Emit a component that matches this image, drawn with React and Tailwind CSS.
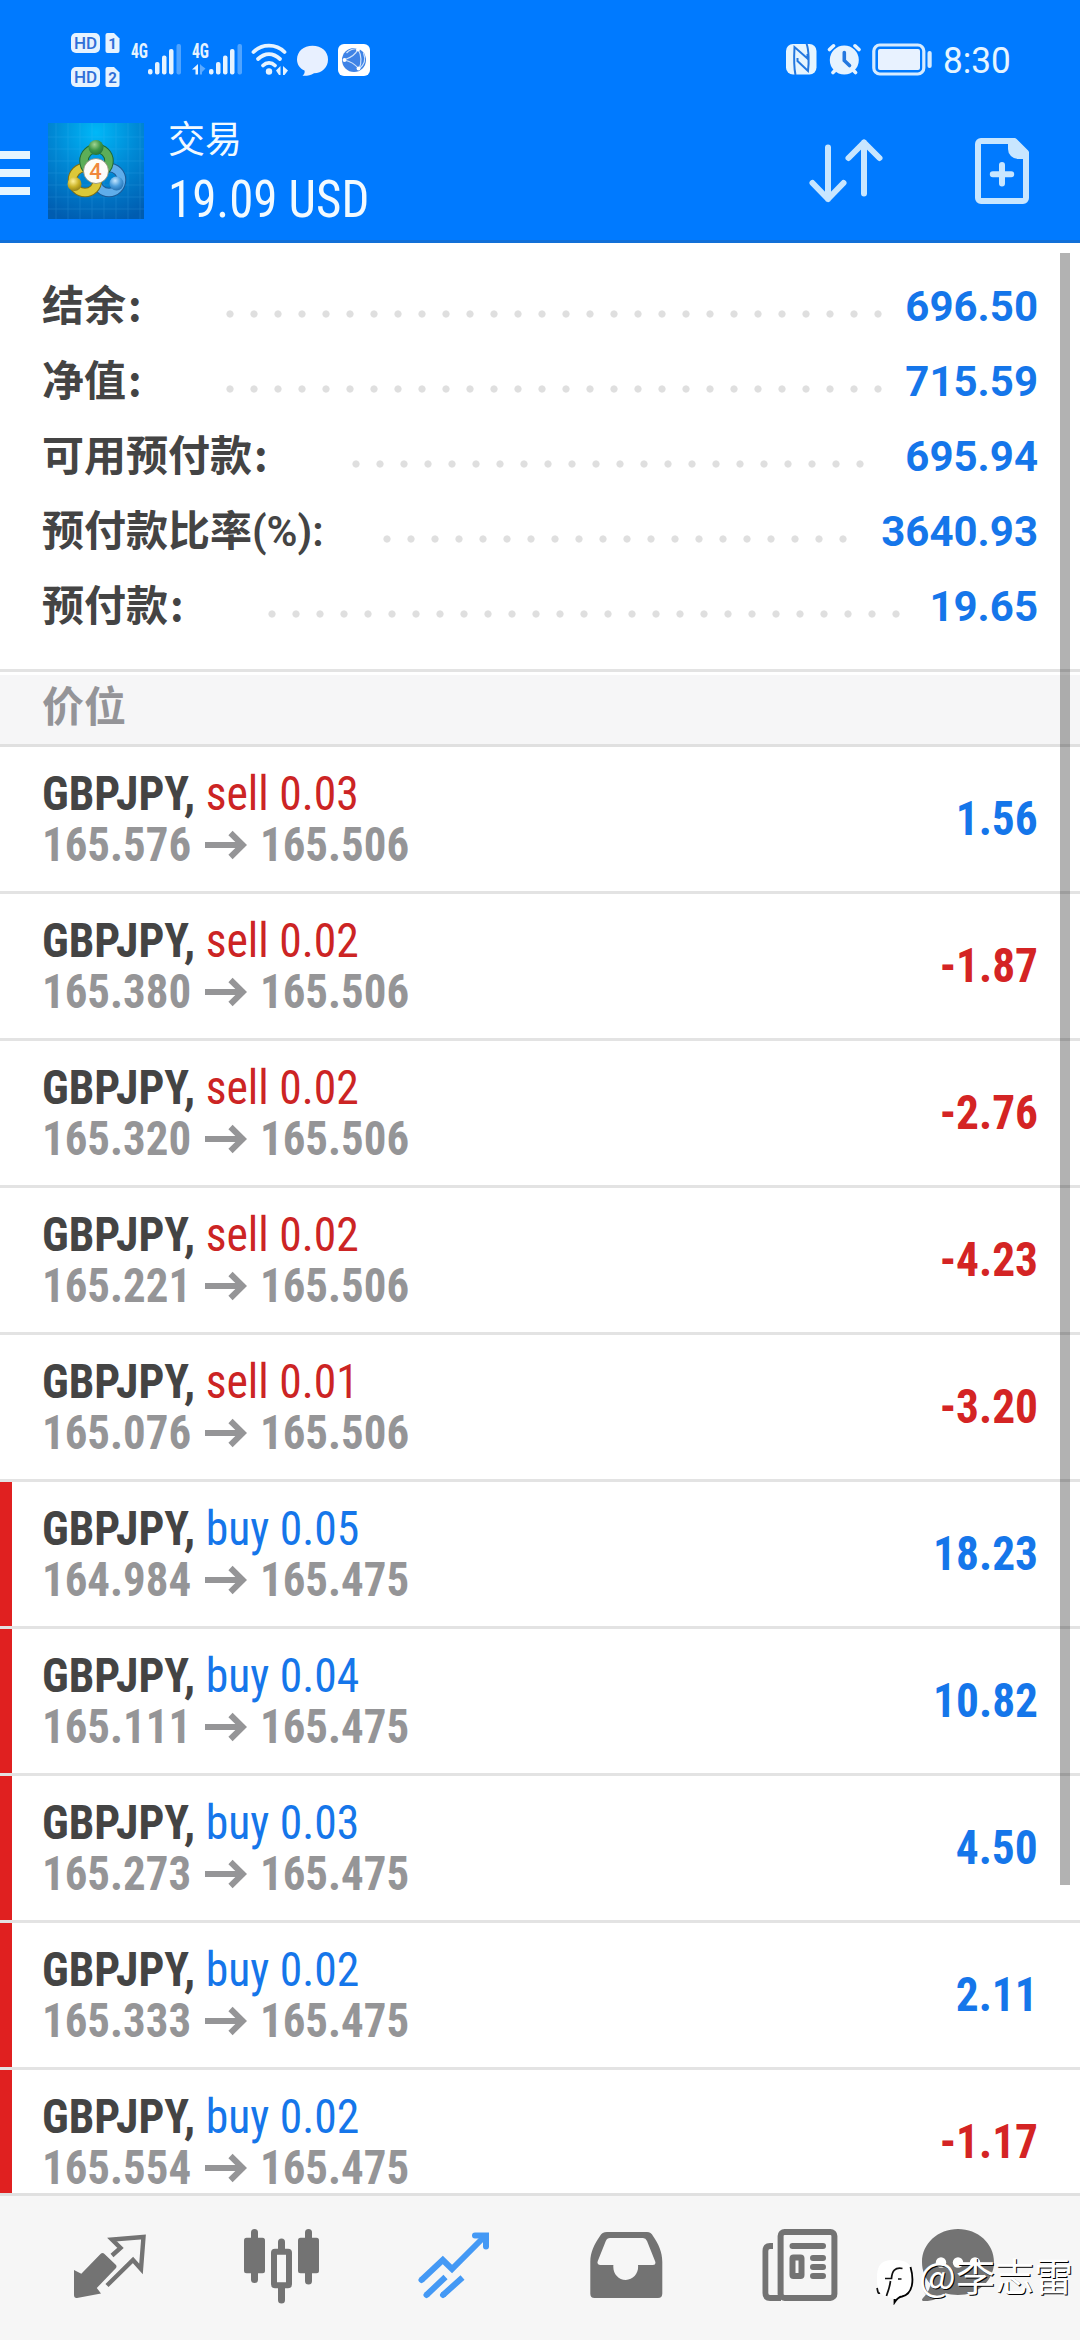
import React from 'react';

const summary = [
  { label: '结余', suffix: ':', value: '696.50', labelWidth: 'w-[176px]', leader: 'w-[672px]' },
  { label: '净值', suffix: ':', value: '715.59', labelWidth: 'w-[176px]', leader: 'w-[672px]' },
  { label: '可用预付款', suffix: ':', value: '695.94', labelWidth: 'w-[302px]', leader: 'w-[528px]' },
  { label: '预付款比率', suffix: '(%):', latin: true, value: '3640.93', labelWidth: 'w-[333px]', leader: 'w-[480px]' },
  { label: '预付款', suffix: ':', value: '19.65', labelWidth: 'w-[218px]', leader: 'w-[648px]' },
];

const positions = [
  { side: 'sell', volume: '0.03', open: '165.576', current: '165.506', profit: '1.56' },
  { side: 'sell', volume: '0.02', open: '165.380', current: '165.506', profit: '-1.87' },
  { side: 'sell', volume: '0.02', open: '165.320', current: '165.506', profit: '-2.76' },
  { side: 'sell', volume: '0.02', open: '165.221', current: '165.506', profit: '-4.23' },
  { side: 'sell', volume: '0.01', open: '165.076', current: '165.506', profit: '-3.20' },
  { side: 'buy', volume: '0.05', open: '164.984', current: '165.475', profit: '18.23', marked: true },
  { side: 'buy', volume: '0.04', open: '165.111', current: '165.475', profit: '10.82', marked: true },
  { side: 'buy', volume: '0.03', open: '165.273', current: '165.475', profit: '4.50', marked: true },
  { side: 'buy', volume: '0.02', open: '165.333', current: '165.475', profit: '2.11', marked: true },
  { side: 'buy', volume: '0.02', open: '165.554', current: '165.475', profit: '-1.17', marked: true },
];

function HdBadges() {
  return (
    <svg width="50" height="56" viewBox="0 0 50 56" className="font-['Roboto'] font-bold" fill="#e6f3ff">
      {[1, 2].map((n) => (
        <g key={n} transform={n === 1 ? 'translate(0 1)' : 'translate(0 35)'}>
          <rect width="29" height="20" rx="5" />
          <path d="M36.500 0 H43 L48.500 5.500 V18 a2 2 0 0 1 -2 2 H36.500 a2 2 0 0 1 -2 -2 V2 a2 2 0 0 1 2 -2z" />
          <text x="14.500" y="16" fontSize="17" fontWeight="500" textAnchor="middle" fill="#2f6fd8">HD</text>
          <text x="41.500" y="16" fontSize="15" textAnchor="middle" fill="#2f6fd8">{n}</text>
        </g>
      ))}
    </svg>
  );
}

function Signal({ data }) {
  return (
    <svg width="50" height="56" viewBox="0 0 50 56" fill="#e6f3ff">
      <text x="0" y="26" fontSize="20" textLength="17" lengthAdjust="spacingAndGlyphs" className="font-['Roboto_Condensed'] font-bold">4G</text>
      <rect x="17" y="37" width="4.500" height="5.500" rx="2" />
      <rect x="24" y="30" width="4.500" height="12.500" rx="2" />
      <rect x="31" y="23.500" width="4.500" height="19" rx="2" />
      <rect x="38" y="17" width="4.500" height="25.500" rx="2" />
      <rect x="45.500" y="12" width="4.500" height="30.500" rx="2" opacity="0.35" />
      {data && (
        <>
          <path d="M6 32 V42.500 H3.500 V37.500 H0z" />
          <path d="M8 32 V42.500 H10 V40 L13.500 36.500 L10 34z" opacity="0.4" />
        </>
      )}
    </svg>
  );
}

function WifiIcon() {
  return (
    <svg width="38" height="56" viewBox="0 0 38 56" fill="none" stroke="#e6f3ff" strokeWidth="3.800" strokeLinecap="round">
      <path d="M2.500 20 C11 11.500 25 11.500 33.500 20" />
      <path d="M7 27 C14 20.500 22 20.500 29 27" />
      <path d="M12 33.500 C15.500 30 20.500 30 24 33.500" />
      <circle cx="18" cy="39.500" r="3.200" fill="#e6f3ff" stroke="none" />
      <path d="M29.500 34 V43 H28 L25 38.500z M32 34 V43 H33.500 L37 38.500z" fill="#e6f3ff" stroke="none" />
    </svg>
  );
}

function BubbleIcon() {
  return (
    <svg width="32" height="56" viewBox="0 0 32 56" fill="#e8f0ff">
      <path d="M15.500 13.800 C24.500 13.800 31 19.500 31 27.500 C31 35.500 25 41 17 41.300 C13.500 43.500 10 44 5.500 43.800 C7.500 42 8 40.500 7.500 38.600 C3 36.500 0 32.500 0 27.500 C0 19.500 6.500 13.800 15.500 13.800z" />
    </svg>
  );
}

function BrowserIcon() {
  return (
    <svg width="32" height="56" viewBox="0 0 32 56">
      <rect y="12" width="32" height="32" rx="6" fill="#ffffff" />
      <circle cx="16" cy="28" r="12" fill="#3f83e6" />
      <g fill="none" stroke="#cfe2fb" strokeWidth="1.200">
        <path d="M6 28 C12 26 18 22 20 17" />
        <path d="M6 28 C11 29 17 32 21 37" />
        <path d="M20 17 C23.500 23 24 31 21 37" />
        <path d="M20 17 C16 16 11 18 8.500 21" />
        <path d="M21 37 C26 33 28 27 25.500 21" />
      </g>
      <g fill="#fff">
        <circle cx="6.500" cy="28" r="1.900" />
        <circle cx="20" cy="17.500" r="1.900" />
        <circle cx="20.500" cy="36.500" r="1.900" />
      </g>
    </svg>
  );
}

function NfcIcon() {
  return (
    <svg width="31" height="56" viewBox="0 0 31 56">
      <rect y="12" width="30.500" height="30.500" rx="7" fill="#e6f5ff" />
      <path d="M9.500 43 C8 36 8 24 8.500 15 L21.500 26.500 V22" fill="none" stroke="#2478e0" strokeWidth="2" />
      <path d="M20.500 11.500 C23 18 23 31 22 39 L11.500 29 V26" fill="none" stroke="#2478e0" strokeWidth="2" />
    </svg>
  );
}

function AlarmIcon() {
  return (
    <svg width="35" height="56" viewBox="0 0 35 56" fill="none" stroke="#e6f3ff" strokeWidth="3.600" strokeLinecap="round">
      <circle cx="17.300" cy="28" r="14.500" fill="#e6f3ff" stroke="none" />
      <path d="M2.500 17.500 L6.500 13.800 M32 17.500 L28 13.800 M6 40.500 L9 37.500 M28.500 40.500 L25.500 37.500" />
      <path d="M17.300 20.500 V28.500 L22.500 33.500" stroke="#2478e0" />
    </svg>
  );
}

function BatteryIcon() {
  return (
    <svg width="60" height="56" viewBox="0 0 60 56" fill="none">
      <rect x="1.800" y="13" width="50" height="29" rx="6" stroke="#d6ebff" strokeWidth="3.200" />
      <rect x="6" y="17" width="42" height="21" rx="2" fill="#e8f2ff" />
      <rect x="55.500" y="19" width="4.200" height="17" rx="2" fill="#d6ebff" />
    </svg>
  );
}

function AppLogo() {
  return (
    <svg width="96" height="96" viewBox="0 0 96 96">
      <defs>
        <radialGradient id="tile" cx="0.5" cy="0.1" r="0.95">
          <stop offset="0" stopColor="#00b8f8" />
          <stop offset="0.45" stopColor="#008ad6" />
          <stop offset="1" stopColor="#005cb0" />
        </radialGradient>
        <radialGradient id="green" cx="0.4" cy="0.3" r="0.8">
          <stop offset="0" stopColor="#9fd492" />
          <stop offset="0.5" stopColor="#3c9647" />
          <stop offset="1" stopColor="#1f6a34" />
        </radialGradient>
        <radialGradient id="yellow" cx="0.4" cy="0.3" r="0.8">
          <stop offset="0" stopColor="#fff29a" />
          <stop offset="0.5" stopColor="#ccb428" />
          <stop offset="1" stopColor="#857414" />
        </radialGradient>
        <radialGradient id="blue" cx="0.4" cy="0.3" r="0.8">
          <stop offset="0" stopColor="#c4e6ff" />
          <stop offset="0.5" stopColor="#4a9ddc" />
          <stop offset="1" stopColor="#1c66a8" />
        </radialGradient>
      </defs>
      <rect width="96" height="96" fill="url(#tile)" />
      <path d="M8 0V96M20 0V96M32 0V96M44 0V96M56 0V96M68 0V96M80 0V96M92 0V96M0 14H96M0 26H96M0 38H96M0 50H96M0 62H96M0 74H96M0 86H96" stroke="#5cc4ff" strokeWidth="0.800" opacity="0.2" />
      <g fill="none">
        <circle cx="61" cy="57" r="12.500" stroke="#1c5a96" strokeWidth="9.500" />
        <circle cx="61" cy="57" r="12.500" stroke="#5fadea" strokeWidth="7.500" />
        <circle cx="37" cy="57" r="12.500" stroke="#7f6f14" strokeWidth="9.500" />
        <circle cx="37" cy="57" r="12.500" stroke="#dcc838" strokeWidth="7.500" />
        <circle cx="48.500" cy="38" r="12.500" stroke="#1f6a34" strokeWidth="9.500" />
        <circle cx="48.500" cy="38" r="12.500" stroke="#5cae58" strokeWidth="7.500" />
      </g>
      <circle cx="48" cy="24.500" r="7.500" fill="url(#green)" />
      <circle cx="26.500" cy="61" r="7" fill="url(#yellow)" />
      <circle cx="68.500" cy="60.500" r="7" fill="url(#blue)" />
      <circle cx="48" cy="48" r="12.500" fill="#fdfcf8" stroke="#8a8a70" strokeWidth="0.800" />
      <text x="47.500" y="56" fontSize="22" textAnchor="middle" fill="#f0883c" className="font-['Roboto'] font-medium">4</text>
    </svg>
  );
}

function SortIcon() {
  return (
    <svg width="76" height="66" viewBox="0 0 76 66" fill="none" stroke="#c8e6ff" strokeWidth="6" strokeLinecap="round" strokeLinejoin="round">
      <path d="M20 9.500 V61 M4.500 45 L20 61 L35.500 45" />
      <path d="M56 55.500 V4.500 M40.500 20 L56 4.500 L71.500 20" />
    </svg>
  );
}

function NewOrderIcon() {
  return (
    <svg width="54" height="66" viewBox="0 0 54 66" fill="none" stroke="#c8e6ff" strokeWidth="6" strokeLinejoin="round">
      <path d="M6 3 H39.500 L51 14.500 V60 a3 3 0 0 1 -3 3 H6 a3 3 0 0 1 -3 -3 V6 a3 3 0 0 1 3 -3z" />
      <path d="M33 3 H40 L51 14 V21 H43 a10 10 0 0 1 -10 -10z" fill="#c8e6ff" stroke="none" />
      <path d="M27 27 V45.500 M17.800 36.300 H36.200" strokeLinecap="round" />
    </svg>
  );
}

function QuotesIcon() {
  return (
    <svg width="100" height="100" viewBox="0 0 100 100" fill="none">
      <path d="M16 52 L23.300 55.700 L42.500 36 Q44.500 34.200 46.500 36 L58 47 Q59 48.500 58 50 L38.800 70 L43 75.500 L19 80 Q16 80.300 16 77z" fill="#737373" />
      <path d="M54 37.500 L62.500 30 L54 21.500 L85.500 19 L83 51 L75 42 L49 67.500" stroke="#737373" strokeWidth="4.400" />
    </svg>
  );
}

function ChartIcon() {
  return (
    <svg width="100" height="100" viewBox="0 0 100 100" fill="#737373">
      <rect x="13" y="19.700" width="21" height="35.500" rx="2.500" />
      <rect x="20" y="11" width="7" height="54" rx="3.500" />
      <rect x="67" y="19.700" width="21" height="35.500" rx="2.500" />
      <rect x="74" y="11" width="7" height="55.500" rx="3.500" />
      <rect x="47" y="20.500" width="7" height="15" rx="3.500" />
      <rect x="47" y="66" width="7" height="19.500" rx="3.500" />
      <rect x="43" y="33.700" width="15" height="33.500" rx="1" fill="none" stroke="#737373" strokeWidth="6" />
    </svg>
  );
}

function TradeIcon() {
  return (
    <svg width="100" height="100" viewBox="0 0 100 100" fill="none" stroke="#4499f5" strokeWidth="6" strokeLinejoin="miter">
      <path d="M17.500 62 L38.800 42 L48 51 L80 19" />
      <path d="M17.500 62 L17.600 61.900 M71 17.500 H82 V28.500 M22.500 77 L22.600 76.900 M39 77 L39.100 76.900" strokeLinecap="round" />
      <path d="M22.500 77 L41.500 59 M39 77 L58.500 59.500" />
    </svg>
  );
}

function HistoryIcon() {
  return (
    <svg width="100" height="100" viewBox="0 0 100 100">
      <path
        d="M31 14 H71 Q75 14 77 18 C82.500 26 86.300 34 86.300 44 V75.500 Q86.300 80 82 80 H18.500 Q14.300 80 14.300 75.500 V44 C14.300 34 18.500 26 24 18 Q26 14 31 14z M34 20 Q31 20 29.800 23 L21.800 43 Q20.500 47 24 47 H37.400 C36.500 55 42 62 49.800 62 C57.500 62 63 55 62 47 H77 Q80.500 47 79 43 L71 23 Q69.700 20 67 20z"
        fill="#737373"
        fillRule="evenodd"
      />
    </svg>
  );
}

function NewsIcon() {
  return (
    <svg width="100" height="100" viewBox="0 0 100 100" fill="none" stroke="#737373">
      <path d="M24 28 H21 Q16.400 28 16.400 33 V75 Q16.400 80 21 80 H32" strokeWidth="5.800" />
      <rect x="31.600" y="13.900" width="53.800" height="66" rx="4" strokeWidth="6" />
      <path d="M43.500 28 H74" strokeWidth="6" strokeLinecap="round" />
      <path d="M64 40 H74 M64 49 H74 M64 58 H74" strokeWidth="6" strokeLinecap="round" />
      <rect x="43.500" y="39.500" width="9" height="18.500" rx="1" strokeWidth="6" />
    </svg>
  );
}

function ChatIcon() {
  return (
    <svg width="100" height="100" viewBox="0 0 100 100">
      <path d="M36 11 C56 11 72 25.500 72 44 C72 62.500 56 77 36 77 C31 77 27 76.500 23.500 75.300 C17 81 9 83.500 1 83 Q-1 82 1 80 C5 76 7.500 72 8.500 66 C3 60 0 52.500 0 44 C0 25.500 16 11 36 11z" fill="#737373" />
      <g fill="#fff">
        <circle cx="19" cy="44.500" r="5.200" />
        <circle cx="36" cy="44.500" r="5.200" />
        <circle cx="53" cy="44.500" r="5.200" />
      </g>
    </svg>
  );
}

function ArrowRight() {
  return (
    <svg width="42" height="30" viewBox="0 0 42 30" fill="none" stroke="#959597" strokeWidth="6">
      <path d="M0 15 H37 M25.500 3 L37.800 15 L25.500 27" />
    </svg>
  );
}

function StatusBar() {
  return (
    <div className="flex h-[102px] items-start justify-between pt-8 pl-[71px] pr-[67px]">
      <div className="flex">
        <HdBadges />
        <div className="ml-2.5"><Signal /></div>
        <div className="ml-[11px]"><Signal data /></div>
        <div className="ml-[9px]"><WifiIcon /></div>
        <div className="ml-2"><BubbleIcon /></div>
        <div className="ml-[9px]"><BrowserIcon /></div>
      </div>
      <div className="flex">
        <NfcIcon />
        <div className="ml-2.5"><AlarmIcon /></div>
        <div className="ml-2.5"><BatteryIcon /></div>
        <div className="ml-[11px] w-[70px]">
          <span className="inline-block origin-left scale-x-[0.95] font-['Roboto'] text-[37px] leading-[58px] text-[#e6f5ff]">8:30</span>
        </div>
      </div>
    </div>
  );
}

function Header() {
  return (
    <header className="h-[243px] shrink-0 border-b-[3px] border-[#1270d8] bg-[#007aff]">
      <StatusBar />
      <div className="flex h-[138px] items-center">
        <div className="mt-1 flex w-[30px] flex-col gap-2.5">
          <div className="h-2 bg-[#e6f5ff]" />
          <div className="h-2 bg-[#e6f5ff]" />
          <div className="h-2 bg-[#e6f5ff]" />
        </div>
        <div className="ml-[18px]"><AppLogo /></div>
        <div className="mb-[4px] ml-6 flex flex-col gap-[5px] text-[#f2faff]">
          <span className="font-['Noto_Sans_CJK_SC',sans-serif] text-[37px] leading-[56px]">交易</span>
          <span className="origin-left scale-x-[0.94] font-['Roboto_Condensed',sans-serif] text-[52px] leading-[60px] whitespace-nowrap">19.09 USD</span>
        </div>
        <div className="ml-auto flex items-center gap-[91px] pr-[51px]">
          <SortIcon />
          <NewOrderIcon />
        </div>
      </div>
    </header>
  );
}

function Summary() {
  return (
    <section className="border-b-[3px] border-[#e3e3e3] pt-[22px] pb-[29px] pr-[42px] pl-[42px]">
      {summary.map((item) => (
        <div key={item.label} className="flex h-[75px] items-baseline leading-[75px]">
          <div className={`${item.labelWidth} font-['Noto_Sans_CJK_SC',sans-serif] text-[42px] font-bold whitespace-nowrap text-[#444444]`}>
            {item.label}
            <span className={item.latin ? "font-['Roboto'] font-semibold" : 'ml-[2px]'}>{item.suffix}</span>
          </div>
          <div className={`${item.leader} mb-[22px] h-2 self-end bg-[radial-gradient(circle,#dfdfdf_3.2px,transparent_4px)] bg-[length:24px_8px]`} />
          <div className="ml-auto font-['Roboto'] text-[42px] font-bold text-[#1576ea]">{item.value}</div>
        </div>
      ))}
    </section>
  );
}

function Position({ item }) {
  const buy = item.side === 'buy';
  const loss = item.profit.startsWith('-');
  return (
    <div className="flex h-[147px] shrink-0 border-b-[3px] border-[#e3e3e3] font-['Roboto_Condensed',sans-serif] text-[48px] leading-[51px]">
      <div className={item.marked ? 'w-3 bg-[#e02020]' : 'w-3'} />
      <div className="flex flex-1 items-center justify-between pr-[42px] pl-[30px]">
        <div>
          <div className="origin-left scale-x-[0.95] font-bold whitespace-nowrap text-[#444444]">
            GBPJPY, <span className={buy ? 'font-normal text-[#1576ea]' : 'font-normal text-[#cc2424]'}>{item.side} {item.volume}</span>
          </div>
          <div className="flex items-center font-bold text-[#959597]">
            <span className="w-[163px] origin-left scale-x-[0.935]">{item.open}</span>
            <ArrowRight />
            <span className="ml-[13px] origin-left scale-x-[0.935]">{item.current}</span>
          </div>
        </div>
        <div className={`mb-0.5 origin-right scale-x-[0.945] font-bold ${loss ? 'text-[#d42424]' : 'text-[#1576ea]'}`}>{item.profit}</div>
      </div>
    </div>
  );
}

function TabBar() {
  return (
    <nav className="relative flex h-[147px] shrink-0 items-center border-t-[3px] border-[#e0e0e0] bg-[#f6f6f6] px-[22px]">
      {[QuotesIcon, ChartIcon, TradeIcon, HistoryIcon, NewsIcon, ChatIcon].map((Icon, i) => (
        <div key={i} className="flex flex-1 justify-center">
          <Icon />
        </div>
      ))}
      <Watermark />
    </nav>
  );
}

function Watermark() {
  return (
    <div className="absolute top-[61px] right-[7px] flex items-start">
      <svg width="42" height="48" viewBox="0 0 42 48">
        <path d="M20 3 C34 3 39 8 39 22 C39 34 35 39 27 40 L20.500 46 L19 41 C7 40 3 35 3 22 C3 8 7 3 20 3z" fill="#fff" />
        <path d="M36.500 10 C40 22 39.500 37 28 39.500 Q24 40 20.500 45.500 V42" fill="none" stroke="#000" strokeWidth="1.800" />
        <path d="M28.500 11.500 C21 10 18 14 17.500 21.500 H11 M24 22 H27.500 M16.500 24 C15 34 13 36 12.500 39 M6 36 C3.500 37 4 34 3 31" fill="none" stroke="#111" strokeWidth="1.700" />
      </svg>
      <span className="-mt-[3px] ml-[3px] font-['Noto_Sans_CJK_SC',sans-serif] text-[39px] leading-[40px] font-normal text-white [text-shadow:1px_1px_0.5px_#000]">@李志雷</span>
    </div>
  );
}

export default function App() {
  return (
    <div className="flex h-[2340px] w-[1080px] flex-col overflow-hidden bg-white">
      <Header />
      <main className="relative flex min-h-0 flex-1 flex-col overflow-hidden">
        <Summary />
        <div className="mt-[3px] h-[72px] shrink-0 border-b-[3px] border-[#e0e0e0] bg-[#f6f6f7] pl-[42px] font-['Noto_Sans_CJK_SC',sans-serif] text-[42px] leading-[57px] font-bold text-[#949498]">
          价位
        </div>
        {positions.map((item, i) => (
          <Position key={i} item={item} />
        ))}
        {/* scroll thumb */}
        <div className="absolute top-2.5 right-2.5 h-[1632px] w-2.5 bg-black/30" />
      </main>
      <TabBar />
    </div>
  );
}
